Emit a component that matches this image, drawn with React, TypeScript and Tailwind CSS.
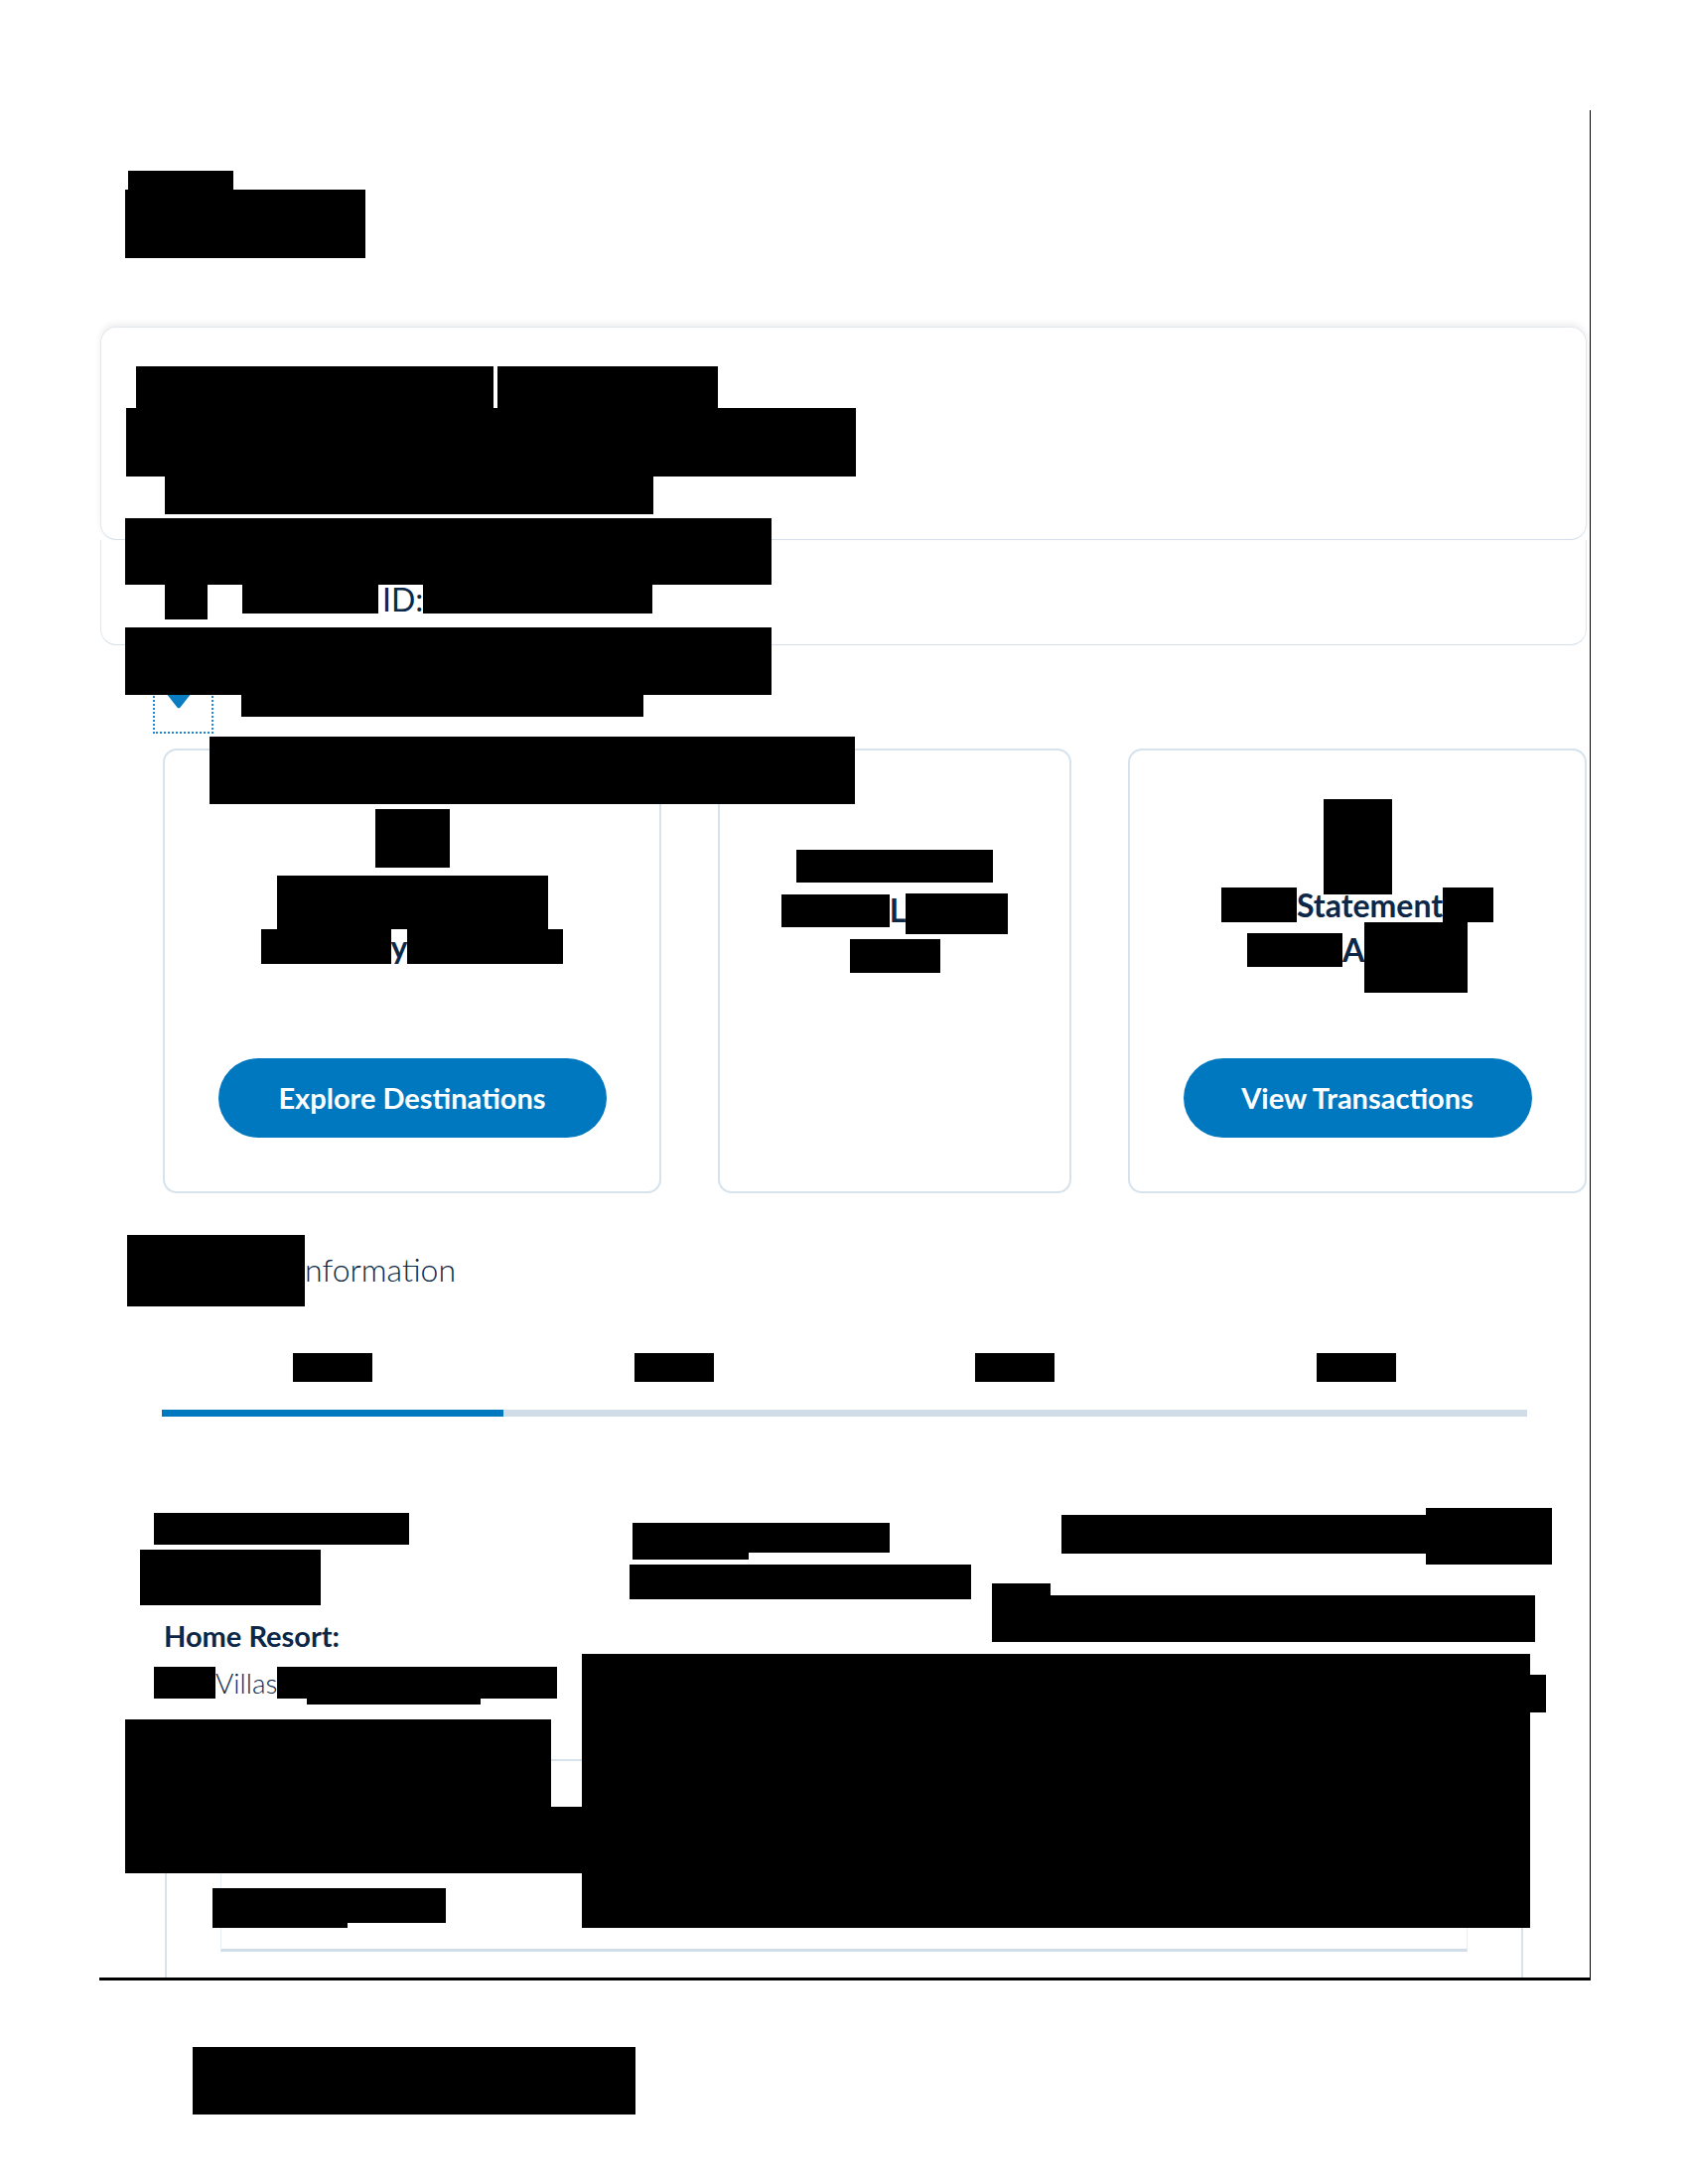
import React from 'react';

const navy = 'text-[#0c2747]';

const Box: React.FC<{ className?: string }> = ({ className = '' }) => <div className={`bg-black shrink-0 ${className}`} />;

const tabs = ['a', 'b', 'c', 'd'];

const Chevron: React.FC = () => (
  <svg width="26" height="17" viewBox="0 0 26 17" className="block">
    <path d="M2 0 H24 Q26.5 0 25 2.2 L14.6 15.4 Q13 17.2 11.4 15.4 L1 2.2 Q-0.5 0 2 0 Z" fill="#0a7cc2" />
  </svg>
);

const App: React.FC = () => {
  return (
    <div className={`min-h-[2200px] bg-white pt-[111px] font-['Lato',sans-serif] ${navy}`}>
      <div className="relative ml-[100px] w-[1502px] border-r border-b-[3px] border-black">
        {/* page title */}
        <div className="pt-[61px] pl-[26px]">
          <Box className="ml-[3px] w-[106px] h-[19px]" />
          <Box className="w-[242px] h-[69px]" />
        </div>

        {/* owner cards */}
        <div className="mt-[69px] ml-[1px] w-[1497px]">
          <div className="h-[215px] rounded-[16px] border border-[#e2e7ed] border-b-[#d5e0ea] shadow-[0_-3px_6px_rgba(0,0,0,0.07)] pt-[39px]">
            <div className="flex ml-[35px]">
              <Box className="w-[360px] h-[42px]" />
              <Box className="ml-[4px] w-[222px] h-[42px]" />
            </div>
            <Box className="ml-[25px] w-[735px] h-[69px]" />
            <Box className="ml-[64px] w-[492px] h-[38px]" />
          </div>
          <div className="h-[106px] rounded-b-[16px] border border-t-0 border-[#e2e7ed] border-b-[#d5e0ea] pt-[45px]">
            <div className="flex items-start ml-[64px]">
              <Box className="w-[43px] h-[35px]" />
              <Box className="ml-[35px] w-[137px] h-[29px]" />
              <span className="ml-[4px] text-[32px] leading-[29px] font-normal whitespace-nowrap">ID:</span>
              <Box className="w-[231px] h-[29px]" />
            </div>
          </div>
        </div>

        {/* focus marker */}
        <div className="flex items-start pl-[54px] mt-[47px]">
          <div className="relative w-[61px] h-[42px] border-2 border-dotted border-[#1f86d6]">
            <div className="ml-[11px] -mt-[2px]">
              <Chevron />
            </div>
          </div>
          <Box className="ml-[28px] mt-[3px] w-[405px] h-[22px]" />
        </div>

        {/* quick links */}
        <div className="mt-[15px] pl-[64px] flex gap-[57px]">
          <div className="w-[502px] h-[448px] rounded-[14px] border-2 border-[#d6e2ec] flex flex-col items-center pt-[59px]">
            <Box className="w-[75px] h-[59px]" />
            <Box className="mt-[8px] w-[273px] h-[54px]" />
            <div className="flex items-start">
              <Box className="w-[131px] h-[35px]" />
              <span className="text-[32px] font-bold leading-[35px]">y</span>
              <Box className="w-[157px] h-[35px]" />
            </div>
            <button className="mt-[95px] w-[391px] h-[80px] rounded-full bg-[#0078bf] text-white text-[29px] font-bold">
              Explore Destinations
            </button>
          </div>
          <div className="w-[356px] h-[448px] rounded-[14px] border-2 border-[#d6e2ec] flex flex-col items-center pt-[100px]">
            <Box className="w-[198px] h-[33px]" />
            <div className="mt-[11px] flex items-start">
              <Box className="mt-[1px] w-[109px] h-[33px]" />
              <span className="text-[32px] font-bold leading-[33px]">L</span>
              <Box className="w-[103px] h-[41px]" />
            </div>
            <Box className="mt-[5px] w-[91px] h-[34px]" />
          </div>
          <div className="w-[462px] h-[448px] rounded-[14px] border-2 border-[#d6e2ec] flex flex-col items-center pt-[49px]">
            <Box className="w-[69px] h-[96px]" />
            <div className="-mt-[7px] flex items-start">
              <Box className="w-[76px] h-[35px]" />
              <span className="text-[32px] font-bold leading-[35px]">Statement</span>
              <Box className="w-[51px] h-[35px]" />
            </div>
            <div className="flex items-start">
              <Box className="mt-[11px] w-[96px] h-[34px]" />
              <span className="mt-[11px] text-[32px] font-bold leading-[34px]">A</span>
              <Box className="w-[104px] h-[71px]" />
            </div>
            <button className="mt-[66px] w-[351px] h-[80px] rounded-full bg-[#0078bf] text-white text-[29px] font-bold">
              View Transactions
            </button>
          </div>
        </div>

        {/* information heading */}
        <div className="mt-[42px] pl-[28px] flex items-start h-[72px]">
          <Box className="w-[179px] h-[72px]" />
          <span className="mt-[15px] text-[32px] font-light leading-[40px]">nformation</span>
        </div>

        {/* tabs */}
        <div className="mt-[47px] ml-[63px] w-[1375px]">
          <div className="grid grid-cols-4">
            {tabs.map((t) => (
              <div key={t} className="flex justify-center">
                <Box className="w-[80px] h-[29px]" />
              </div>
            ))}
          </div>
          <div className="mt-[28px] h-[7px] bg-[#d0dde8]">
            <div className="w-1/4 h-full bg-[#0078bf]" />
          </div>
        </div>

        {/* details */}
        <div className="mt-[92px] pl-[41px] flex items-start">
          <div className="w-[493px]">
            <Box className="ml-[14px] mt-[5px] w-[257px] h-[32px]" />
            <Box className="mt-[5px] w-[182px] h-[56px]" />
            <div className="ml-[24px] mt-[15px] text-[29px] font-bold leading-[32px]">Home Resort:</div>
            <div className="ml-[14px] mt-[15px] flex items-start h-[38px]">
              <Box className="w-[62px] h-[32px]" />
              <span className="text-[28px] font-light leading-[32px]">Villas</span>
              <div>
                <Box className="w-[282px] h-[32px]" />
                <Box className="ml-[30px] w-[175px] h-[6px]" />
              </div>
            </div>
          </div>
          <div className="w-[365px]">
            <Box className="ml-[3px] mt-[15px] w-[259px] h-[30px]" />
            <Box className="ml-[3px] w-[117px] h-[7px]" />
            <Box className="mt-[5px] w-[344px] h-[35px]" />
          </div>
          <div className="w-[600px]">
            <div className="flex items-start">
              <Box className="ml-[70px] mt-[7px] w-[367px] h-[39px]" />
              <Box className="w-[127px] h-[57px]" />
            </div>
            <div className="mt-[19px] flex items-start">
              <Box className="w-[59px] h-[59px]" />
              <Box className="mt-[12px] w-[488px] h-[47px]" />
            </div>
          </div>
        </div>

        <div className="mt-[55px] ml-[66px] w-[1368px] h-[220px] border-2 border-b-0 border-[#d6e2ec] pt-[26px]">
          <div className="ml-[54px] w-[1256px] h-[166px] border-x border-[#e6edf3] border-b-[3px] border-b-[#d0dde9]" />
        </div>

        {/* redaction overlays */}
        <Box className="absolute left-[26px] top-[411px] w-[651px] h-[67px]" />
        <Box className="absolute left-[26px] top-[521px] w-[651px] h-[68px]" />
        <Box className="absolute left-[111px] top-[631px] w-[650px] h-[68px]" />
        <Box className="absolute left-[26px] top-[1621px] w-[429px] h-[155px]" />
        <Box className="absolute left-[455px] top-[1709px] w-[31px] h-[67px]" />
        <Box className="absolute left-[486px] top-[1555px] w-[955px] h-[276px]" />
        <Box className="absolute left-[1441px] top-[1576px] w-[16px] h-[38px]" />
        <Box className="absolute left-[114px] top-[1791px] w-[235px] h-[35px]" />
        <Box className="absolute left-[114px] top-[1826px] w-[136px] h-[5px]" />
      </div>

      <Box className="ml-[194px] mt-[67px] w-[446px] h-[68px]" />
    </div>
  );
};

export default App;
